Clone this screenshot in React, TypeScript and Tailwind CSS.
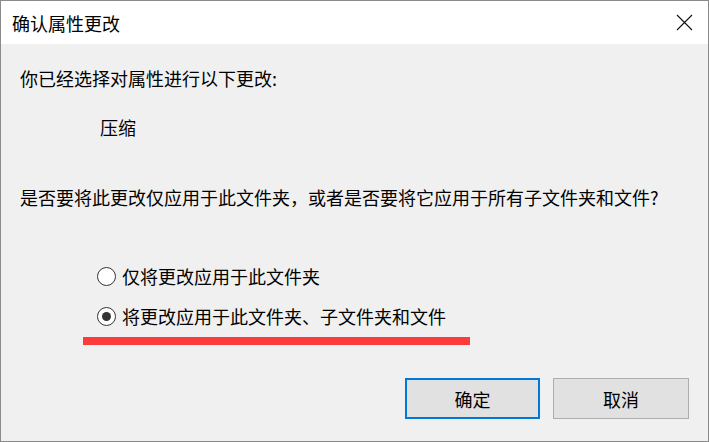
import React from "react";

const font = { fontFamily: '"Noto Sans CJK SC", "Noto Sans", sans-serif' };

function Radio({ checked, label }: { checked?: boolean; label: string }) {
  return (
    <div className="flex items-center h-[24px] ml-[96px]">
      <div className="w-[19px] h-[19px] rounded-full border border-[#333333] bg-white flex items-center justify-center">
        {checked && <div className="w-[9px] h-[9px] rounded-full bg-[#333333]" />}
      </div>
      <span className="ml-[6px] text-[18px] leading-[24px] text-black">{label}</span>
    </div>
  );
}

export default function App() {
  return (
    <div
      className="w-[709px] h-[442px] border border-[#8a8a8a] flex flex-col overflow-hidden"
      style={font}
    >
      <div className="h-[43px] bg-white flex items-center justify-between pl-[11px] pr-[15px] shrink-0">
        <span className="text-[18px] leading-[24px] text-black">确认属性更改</span>
        <svg width="17" height="17" viewBox="0 0 17 17" className="mb-[1px]">
          <path d="M1 1 L16 16 M16 1 L1 16" stroke="#111" strokeWidth="1.1" fill="none" />
        </svg>
      </div>
      <div className="flex-1 bg-[#f0f0f0] flex flex-col text-black">
        <div className="mt-[22px] ml-[19px] text-[18px] leading-[24px]">你已经选择对属性进行以下更改:</div>
        <div className="mt-[25px] ml-[99px] text-[18px] leading-[24px]">压缩</div>
        <div className="mt-[46px] ml-[19px] text-[18px] leading-[24px]">
          是否要将此更改仅应用于此文件夹，或者是否要将它应用于所有子文件夹和文件?
        </div>
        <div className="mt-[55px]">
          <Radio label="仅将更改应用于此文件夹" />
        </div>
        <div className="mt-[16px]">
          <Radio checked label="将更改应用于此文件夹、子文件夹和文件" />
        </div>
        <div className="mt-[9px] ml-[82px] w-[387px] h-[8px] bg-[#fc3c3c]" />
        <div className="mt-[33px] flex justify-end gap-[13px] pr-[19px]">
          <button className="w-[135px] h-[41px] bg-[#e1e1e1] border-2 border-[#0078d7] text-[18px] leading-[24px] text-black">
            确定
          </button>
          <button className="w-[136px] h-[41px] bg-[#e1e1e1] border border-[#adadad] text-[18px] leading-[24px] text-black">
            取消
          </button>
        </div>
      </div>
    </div>
  );
}
